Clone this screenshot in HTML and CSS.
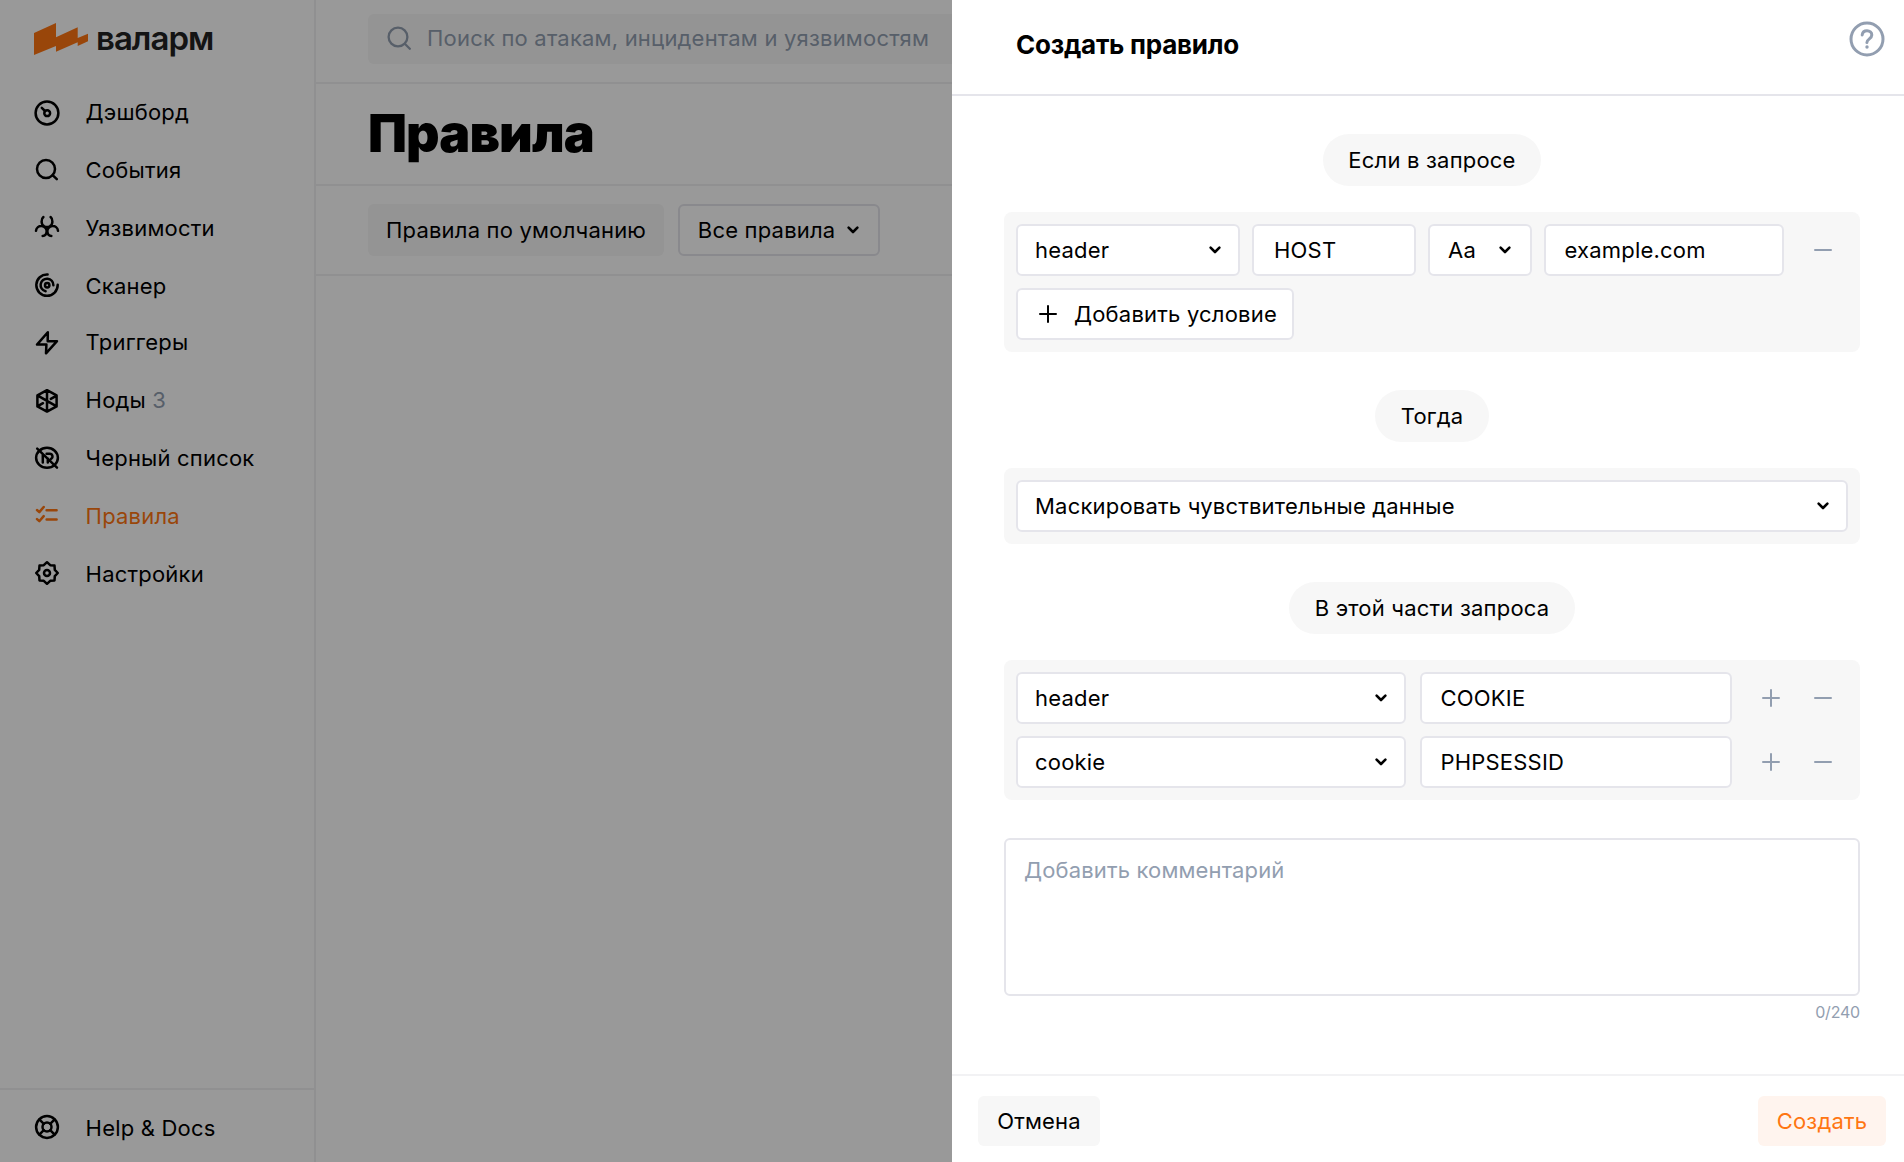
FILE: index.html
```
<!DOCTYPE html>
<html lang="ru">
<head>
<meta charset="utf-8">
<title>Правила</title>
<link rel="stylesheet" href="styles.css">
</head>
<body>
<svg class="defs" aria-hidden="true">
  <symbol id="chevron" viewBox="0 0 14 10"><path d="M2.6 2.6 7 7l4.4-4.4"/></symbol>
  <symbol id="plus" viewBox="0 0 18 18"><path d="M1 9h16M9 1v16"/></symbol>
  <symbol id="minus" viewBox="0 0 18 18"><path d="M1 9h16"/></symbol>
</svg>
<div class="app">
  <aside class="sidebar">
    <div class="logo">
      <svg class="logo-mark" viewBox="0 0 54 32"><path d="M0 10 22 0v14.3L43.7 4.3V15L54 10.7v7.6L43.7 23v-3.7L22 28.7V23L0 32z"/></svg>
      <span class="logo-name">валарм</span>
    </div>
    <nav class="menu">
      <a class="menu-item"><svg class="icon" viewBox="0 0 28 28"><circle cx="14" cy="15" r="11.4"/><circle cx="14.2" cy="15.2" r="2.9"/><path d="m8.8 9.8 3.2 3.2"/></svg><span>Дэшборд</span></a>
      <a class="menu-item"><svg class="icon" viewBox="0 0 28 28"><circle cx="13" cy="13" r="9"/><path d="m19.6 19.2 4.2 4"/></svg><span>События</span></a>
      <a class="menu-item"><svg class="icon" viewBox="0 0 28 28"><path d="M10.400 3C7.800 5 8 10.500 11 12.200c1.800 1.100 4.200 1.100 6 0 3-1.700 3.200-7.200.6-9.200M3 16.800c.3-3 2.900-4.900 5.700-4.700 3 .2 5.300 2.800 4.900 5.700-.2 2-1.600 4-4 4.200M25 16.800c-.3-3-2.900-4.900-5.700-4.700-3 .2-5.300 2.800-4.900 5.700.2 2 1.600 4 4 4.200"/></svg><span>Уязвимости</span></a>
      <a class="menu-item short"><svg class="icon" viewBox="0 0 28 28"><path d="M14.600 2.400A10.700 10.700 0 1 0 24.700 12.800M20.400 13.200A6.400 6.400 0 1 0 12.600 19.300"/><circle cx="14.200" cy="13.200" r="2.200"/></svg><span>Сканер</span></a>
      <a class="menu-item"><svg class="icon" viewBox="0 0 28 28"><path d="M14.800 4.300 4 16.600h9.400L13 25.300 24 13.200h-9.300z"/></svg><span>Триггеры</span></a>
      <a class="menu-item"><svg class="icon" viewBox="0 0 28 28"><path d="M14 4.200 23.600 9.400v11L14 25.600 4.400 20.400v-11zM14 4.200v21.400M4.400 9.400l19.200 11M23.200 9.800l-5.400 3.100M4.800 20.200l5.200-3"/></svg><span>Ноды <span class="count">3</span></span></a>
      <a class="menu-item"><svg class="icon" viewBox="0 0 28 28"><ellipse cx="14" cy="13.800" rx="10.900" ry="10"/><path d="M4.200 4.700 24 23.600M9.800 10v8.600M14.800 14.500v4.100M13.600 9.800h3.200a2.700 2.700 0 0 1 1.200 5.100"/></svg><span>Черный список</span></a>
      <a class="menu-item active"><svg class="icon" viewBox="0 0 28 28"><path d="m4 8 2.300 2.100L10.700 5M4 17.100l2.300 2.100 4.400-5.100M13.600 8.300h10M13.600 17.400h10"/></svg><span>Правила</span></a>
      <a class="menu-item"><svg class="icon" viewBox="0 0 28 28"><path d="M14 2.200 17.200 5.200 21.500 5.500 21.800 9.800 24.800 13 21.800 16.200 21.500 20.500 17.200 20.800 14 23.800 10.800 20.800 6.500 20.500 6.200 16.200 3.200 13 6.200 9.800 6.500 5.500 10.800 5.200z"/><circle cx="14" cy="13" r="3"/></svg><span>Настройки</span></a>
    </nav>
    <div class="sidebar-foot">
      <a class="menu-item"><svg class="icon" viewBox="0 0 28 28"><circle cx="14" cy="13" r="10.900"/><circle cx="14" cy="13" r="4.500"/><path d="m6.300 5.300 4.500 4.500M21.700 5.300l-4.500 4.500M6.300 20.700l4.500-4.500M21.700 20.700l-4.500-4.500"/></svg><span>Help &amp; Docs</span></a>
    </div>
  </aside>
  <main class="main">
    <header class="topbar">
      <div class="search">
        <svg class="search-icon" viewBox="0 0 24 24"><circle cx="11" cy="11" r="9.400"/><path d="m17.800 17.800 5 5"/></svg>
        <span>Поиск по атакам, инцидентам и уязвимостям</span>
      </div>
    </header>
    <div class="heading"><h1>Правила</h1></div>
    <div class="filters">
      <button class="btn btn-soft">Правила по умолчанию</button>
      <button class="btn btn-outline">Все правила <svg class="chevron"><use href="#chevron"/></svg></button>
    </div>
  </main>
</div>

<div class="scrim"></div>

<section class="drawer">
  <header class="drawer-head">
    <h2>Создать правило</h2>
    <svg class="question" viewBox="0 0 36 36"><circle cx="18" cy="18" r="16"/><path d="M13.200 13.900c.4-2.700 2.300-4.100 4.800-4.100 2.700 0 4.800 1.700 4.800 4.200 0 4-4.900 3.700-4.900 7.600"/><circle class="dot" cx="18" cy="26" r="1.700"/></svg>
  </header>
  <div class="drawer-body">
    <div class="pill">Если в запросе</div>
    <div class="group">
      <div class="row">
        <div class="field w-224"><span>header</span><svg class="chevron"><use href="#chevron"/></svg></div>
        <div class="field input host w-164">HOST</div>
        <div class="field input w-104 case"><span>Aa</span><svg class="chevron"><use href="#chevron"/></svg></div>
        <div class="field input w-240">example.com</div>
        <div class="tools"><svg class="tool"><use href="#minus"/></svg></div>
      </div>
      <button class="field add"><svg class="add-icon"><use href="#plus"/></svg>Добавить условие</button>
    </div>
    <div class="pill">Тогда</div>
    <div class="group">
      <div class="field"><span>Маскировать чувствительные данные</span><svg class="chevron"><use href="#chevron"/></svg></div>
    </div>
    <div class="pill">В этой части запроса</div>
    <div class="group">
      <div class="row wide">
        <div class="field w-390"><span>header</span><svg class="chevron"><use href="#chevron"/></svg></div>
        <div class="field input w-312">COOKIE</div>
        <div class="tools"><svg class="tool"><use href="#plus"/></svg><svg class="tool"><use href="#minus"/></svg></div>
      </div>
      <div class="row wide">
        <div class="field w-390"><span>cookie</span><svg class="chevron"><use href="#chevron"/></svg></div>
        <div class="field input w-312">PHPSESSID</div>
        <div class="tools"><svg class="tool"><use href="#plus"/></svg><svg class="tool"><use href="#minus"/></svg></div>
      </div>
    </div>
    <div class="comment">Добавить комментарий</div>
    <div class="counter">0/240</div>
  </div>
  <footer class="drawer-foot">
    <button class="btn btn-soft cancel">Отмена</button>
    <button class="btn btn-primary">Создать</button>
  </footer>
</section>
</body>
</html>
```
FILE: styles.css
```
* { box-sizing: border-box; }

body {
  margin: 0;
  height: 1162px;
  overflow: hidden;
  position: relative;
  background: #fff;
  color: #000;
  font: 400 22px/28px "Inter", sans-serif;
  letter-spacing: 0.2px;
}

h1, h2 { margin: 0; }

svg { display: block; flex: none; fill: none; stroke: currentColor; stroke-width: 2; stroke-linecap: round; stroke-linejoin: round; }
.defs { position: absolute; width: 0; height: 0; }

button { font: inherit; letter-spacing: inherit; color: inherit; white-space: nowrap; }

.app { display: flex; height: 100%; }

/* Sidebar */
.sidebar { width: 316px; flex: none; display: flex; flex-direction: column; border-right: 2px solid #f0f0f2; }
.logo { height: 83px; display: flex; align-items: flex-start; gap: 8px; padding: 23px 0 0 34px; }
.logo-mark { width: 54px; height: 32px; fill: #ff7612; stroke: none; }
.logo-name { font-size: 33px; line-height: 34px; font-weight: 600; letter-spacing: -1px; color: #222; margin-top: -2px; }
.menu { flex: 1; }
.menu-item { height: 58px; display: flex; align-items: center; gap: 24.600px; padding-left: 33px; }
.menu-item.short { height: 56px; }
.menu-item.short > * { position: relative; top: 1px; }
.icon { width: 28px; height: 28px; stroke-width: 2.5; }
.count { color: #929eb0; }
.active { color: #ff7612; }
.sidebar-foot { height: 74px; border-top: 2px solid #f0f0f2; padding-top: 9px; }

/* Page behind the drawer */
.main { flex: 1; }
.topbar { height: 84px; border-bottom: 2px solid #f0f0f2; padding: 14px 0 0 52px; }
.search { height: 50px; border-radius: 6px; background: #f7f7f7; color: #929eb0; display: flex; align-items: center; gap: 16px; padding: 0 0 2px 19px; }
.search-icon { width: 24px; height: 24px; stroke-width: 2.3; }
.heading { height: 102px; border-bottom: 2px solid #f0f0f2; padding-left: 52px; display: flex; align-items: center; }
.heading h1 { font-size: 52px; line-height: 60px; font-weight: 900; letter-spacing: -0.9px; }
.filters { height: 90px; border-bottom: 2px solid #f0f0f2; padding: 18px 0 0 52px; display: flex; gap: 14px; }

.btn { height: 52px; border: 0; border-radius: 6px; padding: 0 18px; display: flex; align-items: center; justify-content: center; background: none; }
.btn-soft { background: #f7f7f7; }
.btn-outline { width: 202px; border: 2px solid #e5e5eb; gap: 11px; padding: 0 16px; }
.chevron { width: 14px; height: 10px; stroke-width: 2.6; }

.scrim { position: absolute; inset: 0; background: rgba(0, 0, 0, 0.4); }

/* Drawer */
.drawer { position: absolute; top: 0; right: 0; bottom: 0; width: 952px; background: #fff; display: flex; flex-direction: column; }
.drawer-head { height: 96px; border-bottom: 2px solid #e5e5eb; display: flex; justify-content: space-between; align-items: flex-start; padding: 21px 19px 0 64px; }
.drawer-head h2 { font-size: 26px; line-height: 32px; font-weight: 700; letter-spacing: -0.25px; padding-top: 8px; }
.question { width: 36px; height: 36px; color: #929eb0; stroke-width: 3; }
.question .dot { fill: currentColor; stroke: none; }

.drawer-body { flex: 1; display: flex; flex-direction: column; align-items: center; padding: 38px 44px 0 52px; }
.pill { height: 52px; border-radius: 26px; background: #f7f7f7; padding: 0 25.500px; display: flex; align-items: center; }
.group { width: 856px; border-radius: 8px; background: #f7f7f7; padding: 12px; margin: 26px 0 38px; display: flex; flex-direction: column; align-items: stretch; gap: 12px; }
.row { display: flex; gap: 12px; }
.row.wide { gap: 14px; }
.field { height: 52px; border: 2px solid #e5e5eb; border-radius: 6px; background: #fff; display: flex; align-items: center; justify-content: space-between; padding: 0 16px 0 17px; }
.input { padding-left: 18.500px; }
.host { padding-left: 20px; }
.case { padding: 0 18px; }
.w-104 { width: 104px; }
.w-164 { width: 164px; }
.w-224 { width: 224px; }
.w-240 { width: 240px; }
.w-312 { width: 312px; }
.w-390 { width: 390px; }
.add { width: 278px; justify-content: flex-start; gap: 17px; padding-left: 21px; }
.add-icon { width: 18px; height: 18px; }
.tools { flex: 1; display: flex; align-items: center; justify-content: flex-end; gap: 34px; padding-right: 16px; color: #929eb0; }
.tool { width: 18px; height: 18px; }

.comment { width: 856px; height: 158px; border: 2px solid #e5e5eb; border-radius: 6px; padding: 16px 18px; color: #929eb0; letter-spacing: 0.15px; }
.counter { align-self: flex-end; font-size: 16px; line-height: 20px; letter-spacing: -0.2px; margin-top: 6px; color: #929eb0; }

.drawer-foot { height: 88px; border-top: 2px solid #f2f2f4; display: flex; justify-content: space-between; align-items: flex-start; padding: 20px 18px 0 26px; }
.drawer-foot .btn { height: 50px; width: 128px; }
.drawer-foot .cancel { width: 122px; }
.btn-primary { background: #fff4ee; color: #ff7612; }
```
